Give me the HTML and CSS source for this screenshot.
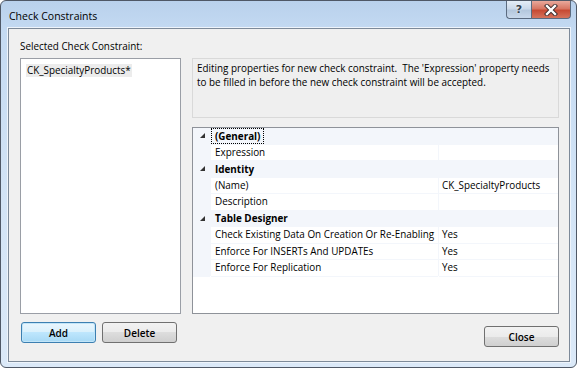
FILE: index.html
```html
<!DOCTYPE html>
<html lang="en">
<head>
  <meta charset="UTF-8" />
  <title>Check Constraints</title>
  <link rel="stylesheet" href="styles.css">
</head>
<body>
  <div class="window">
    <div class="titlebar">
      <span class="title">Check Constraints</span>
      <div class="caption-buttons">
        <div class="cap-btn help">?</div>
        <div class="cap-btn close">
          <svg width="14" height="12" viewBox="0 0 14 12">
            <path d="M3 2 L11 10 M11 2 L3 10" stroke="#3a2a2a" stroke-width="4.2" stroke-linecap="square" />
            <path d="M3 2 L11 10 M11 2 L3 10" stroke="#ffffff" stroke-width="2.4" stroke-linecap="square" />
          </svg>
        </div>
      </div>
    </div>

    <div class="client">
      <div class="label">Selected Check Constraint:</div>
      <div class="body">
        <div class="left">
          <div class="listbox">
            <div class="item">CK_SpecialtyProducts*</div>
          </div>
          <div class="btn-row">
            <button class="btn default">Add</button>
            <button class="btn">Delete</button>
          </div>
        </div>

        <div class="right">
          <div class="desc">Editing properties for new check constraint.&nbsp; The 'Expression' property needs<br>to be filled in before the new check constraint will be accepted.</div>

          <div class="propgrid">
            <div class="cat"><span class="arrow"></span><span class="cat-name focus">(General)</span></div>
            <div class="gutter"></div><div class="name">Expression</div><div class="value"></div>

            <div class="cat"><span class="arrow"></span><span class="cat-name">Identity</span></div>
            <div class="gutter"></div><div class="name">(Name)</div><div class="value">CK_SpecialtyProducts</div>
            <div class="gutter"></div><div class="name">Description</div><div class="value"></div>

            <div class="cat"><span class="arrow"></span><span class="cat-name">Table Designer</span></div>
            <div class="gutter"></div><div class="name">Check Existing Data On Creation Or Re-Enabling</div><div class="value">Yes</div>
            <div class="gutter"></div><div class="name">Enforce For INSERTs And UPDATEs</div><div class="value">Yes</div>
            <div class="gutter"></div><div class="name">Enforce For Replication</div><div class="value">Yes</div>
          </div>

          <div class="close-row">
            <button class="btn">Close</button>
          </div>
        </div>
      </div>
    </div>
  </div>
</body>
</html>
```

FILE: styles.css
```css
body {
  margin: 0;
  background: #ffffff;
  font-family: "Open Sans", "Noto Sans", sans-serif;
  font-size: 9.9px;
  color: #000;
}

.window {
  width: 577px;
  height: 368px;
  box-sizing: border-box;
  border: 1px solid #4f5866;
  border-radius: 6px;
  background: linear-gradient(to bottom, #b9d1ec 0px, #c4daf2 30px, #d3e4f6 200px, #dbe9f8 100%);
  display: flex;
  flex-direction: column;
  overflow: hidden;
}

.titlebar {
  height: 27px;
  display: flex;
  justify-content: space-between;
  align-items: flex-start;
}

.title {
  padding: 7px 0 0 8px;
  line-height: 16px;
  font-size: 10.5px;
}

.caption-buttons {
  display: flex;
  margin-right: 5px;
}

.cap-btn {
  height: 18px;
  box-sizing: border-box;
  border: 1px solid #5b6b80;
  border-top: none;
  display: flex;
  align-items: center;
  justify-content: center;
}

.help {
  width: 25px;
  border-radius: 0 0 0 4px;
  border-right: none;
  background: linear-gradient(to bottom, #e4edf7 0%, #cbd9ea 45%, #b4c7dd 55%, #c9d9ec 100%);
  color: #34404e;
  font-family: "DejaVu Sans", sans-serif;
  font-size: 11px;
  font-weight: bold;
  text-shadow: 0 0 2px #fff;
}

.close {
  width: 40px;
  border-radius: 0 0 4px 0;
  background: linear-gradient(to bottom, #e9a99c 0%, #d77663 45%, #c74a33 55%, #d5735c 100%);
}

.client {
  margin: 0 6px 5px 7px;
  flex: 1;
  border: 1px solid #7d8a99;
  box-shadow: 0 0 0 1px #eef4fb;
  background: #f0f0f0;
  padding: 9px 10px 0 11px;
}

.label {
  line-height: 16px;
  margin-bottom: 4px;
}

.body {
  display: flex;
  gap: 11px;
}

.left {
  width: 161px;
}

.listbox {
  height: 256px;
  box-sizing: border-box;
  border: 1px solid #9a9ea6;
  background: #fff;
  padding: 4px 0 0 5px;
}

.item {
  display: inline-block;
  background: #ececec;
  line-height: 13px;
  padding: 0 1px;
}

.btn-row {
  display: flex;
  gap: 6px;
  margin: 8px 0 0 1px;
}

.btn {
  width: 75px;
  height: 21px;
  box-sizing: border-box;
  border: 1px solid #707070;
  border-radius: 3px;
  background: linear-gradient(to bottom, #f2f2f2 0%, #ebebeb 50%, #dddddd 50%, #cfcfcf 100%);
  font-family: "Open Sans", "Noto Sans", sans-serif;
  font-size: 10px;
  font-weight: 600;
  color: #000;
  padding: 0;
}

.btn.default {
  border-color: #3c7fb1;
  box-shadow: inset 0 0 0 1px #c2e5f8;
  background: linear-gradient(to bottom, #eaf6fd 0%, #d9f0fc 50%, #bee6fd 50%, #a7d9f5 100%);
}

.right {
  width: 367px;
}

.desc {
  height: 60px;
  box-sizing: border-box;
  border: 1px solid #d9d9d9;
  background: #efefef;
  padding: 3px 4px;
  line-height: 13.5px;
  white-space: nowrap;
}

.propgrid {
  margin-top: 9px;
  height: 187px;
  box-sizing: border-box;
  border: 1px solid #8e9299;
  display: grid;
  grid-template-columns: 17px 227px 119px;
  grid-auto-rows: 16.5px;
  column-gap: 1px;
  align-content: start;
  background: linear-gradient(to bottom, #f3f6fb 0, #f3f6fb 148px, #fff 148px);
}

.propgrid > div {
  line-height: 15.5px;
  border-bottom: 1px solid #f3f6fb;
}

.cat {
  grid-column: 1 / 4;
  display: flex;
  align-items: center;
  background: #f3f6fb;
}

.arrow {
  width: 0;
  height: 0;
  margin: 0 6px 0 7px;
  border-style: solid;
  border-width: 0 0 5px 5px;
  border-color: transparent transparent #333 transparent;
}

.cat-name {
  font-weight: bold;
  padding: 0 3px;
  height: 14px;
  line-height: 14px;
  border: 1px solid transparent;
}

.cat-name.focus {
  border: 1px dotted #000;
}

.gutter {
  background: #f3f6fb;
}

.name, .value {
  background: #fff;
  padding-left: 4px;
  white-space: nowrap;
  overflow: hidden;
}

.value {
  padding-left: 3px;
}

.close-row {
  display: flex;
  justify-content: flex-end;
  margin: 12px 0 0 0;
}
```
